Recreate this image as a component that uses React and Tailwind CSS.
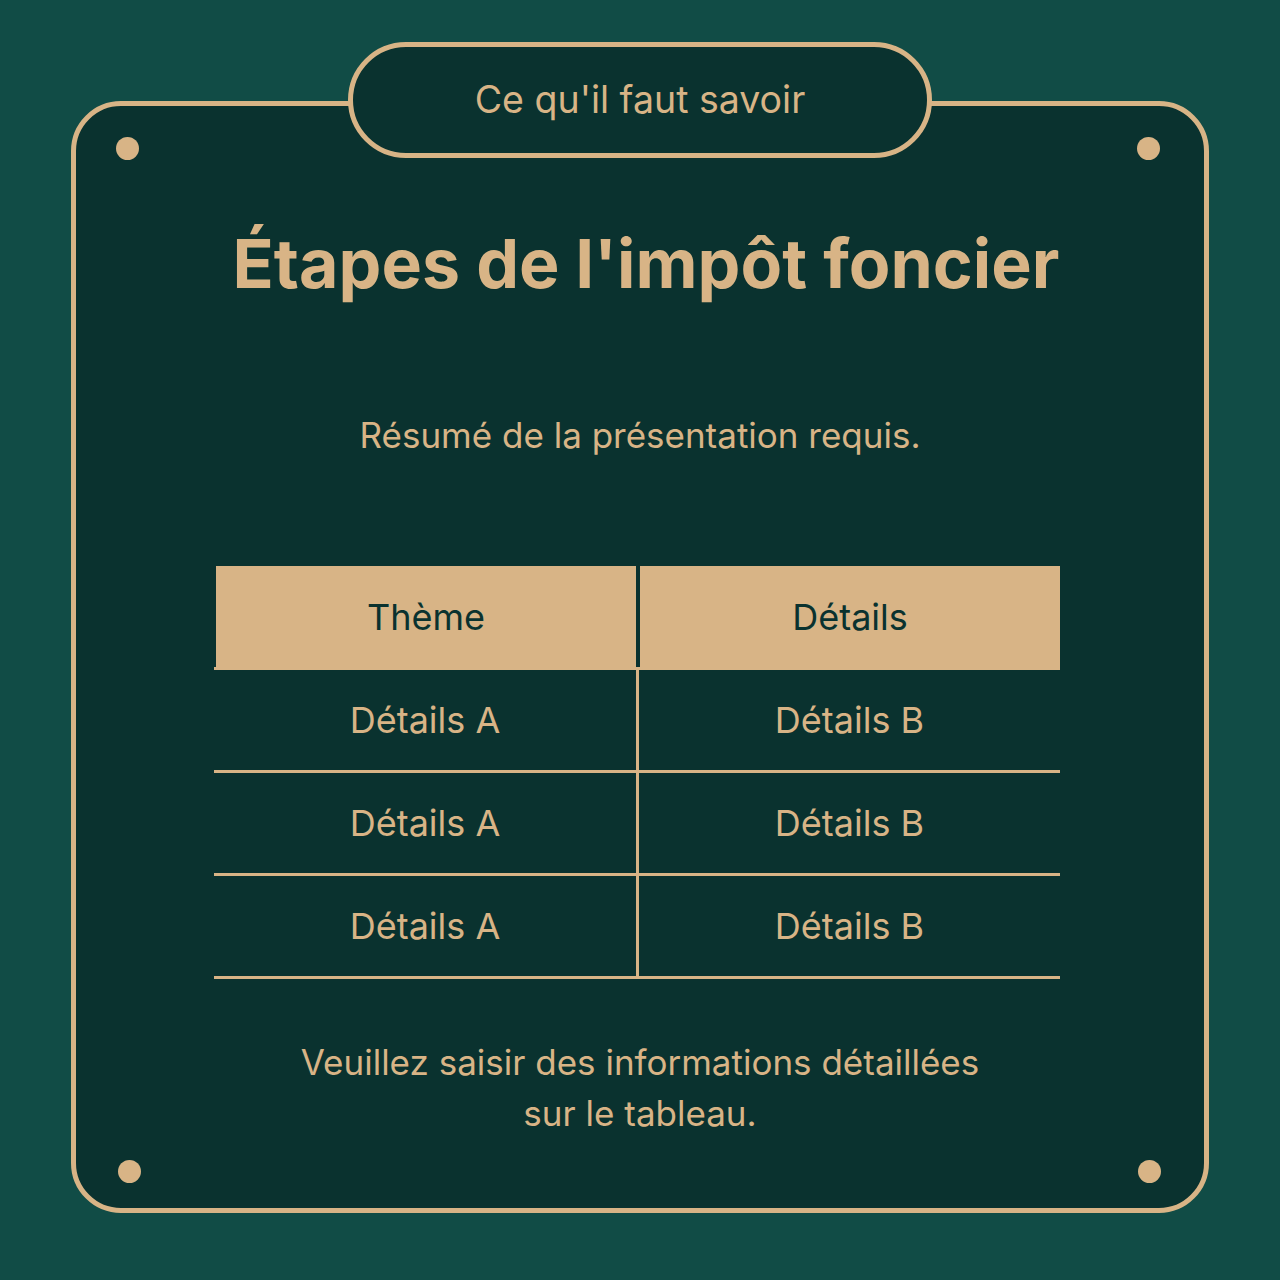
export default function App() {
  const rows = [1, 2, 3];
  return (
    <div
      className="w-[1280px] h-[1280px] bg-[#114c46] pt-[101px]"
      style={{ fontFamily: "Inter, 'Noto Sans', sans-serif" }}
    >
      <div className="relative mx-auto w-[1138px] h-[1112px] rounded-[50px] border-[5px] border-[#d8b486] bg-[#0a322f] flex flex-col items-center">
        {/* pill */}
        <div className="absolute top-[-64px] left-1/2 -translate-x-1/2 w-[584px] h-[116px] rounded-full border-[5px] border-[#d8b486] bg-[#0a322f] flex items-center justify-center">
          <span className="text-[37.5px] leading-none text-[#d8b486]">Ce qu'il faut savoir</span>
        </div>
        {/* dots */}
        <div className="absolute top-[31px] left-[40px] w-[23px] h-[23px] rounded-full bg-[#d8b486]" />
        <div className="absolute top-[31px] right-[44px] w-[23px] h-[23px] rounded-full bg-[#d8b486]" />
        <div className="absolute bottom-[25px] left-[42px] w-[23px] h-[23px] rounded-full bg-[#d8b486]" />
        <div className="absolute bottom-[25px] right-[43px] w-[23px] h-[23px] rounded-full bg-[#d8b486]" />

        <h1 className="mt-[117px] ml-[12px] text-[68px] leading-[80px] font-bold text-[#d8b486]">
          Étapes de l'impôt foncier
        </h1>
        <p className="mt-[108px] text-[35px] leading-[48px] text-[#d8b486]">
          Résumé de la présentation requis.
        </p>

        <div className="mt-[107px] mr-[6px] w-[846px]">
          <div className="flex h-[101px] pl-[2px] gap-[4px]">
            <div className="w-[420px] bg-[#d8b486] flex items-center justify-center text-[36px] text-[#0a322f]">
              Thème
            </div>
            <div className="flex-1 bg-[#d8b486] flex items-center justify-center text-[36px] text-[#0a322f]">
              Détails
            </div>
          </div>
          {rows.map((r) => (
            <div key={r} className="flex h-[103px] border-t-[3px] border-[#d8b486]">
              <div className="w-[425px] border-r-[3px] border-[#d8b486] flex items-center justify-center text-[36px] text-[#d8b486]">
                Détails A
              </div>
              <div className="flex-1 flex items-center justify-center text-[36px] text-[#d8b486]">
                Détails B
              </div>
            </div>
          ))}
          <div className="h-[3px] bg-[#d8b486]" />
        </div>

        <p className="mt-[58px] text-[35px] leading-[51px] text-center text-[#d8b486]">
          Veuillez saisir des informations détaillées
          <br />
          sur le tableau.
        </p>
      </div>
    </div>
  );
}
